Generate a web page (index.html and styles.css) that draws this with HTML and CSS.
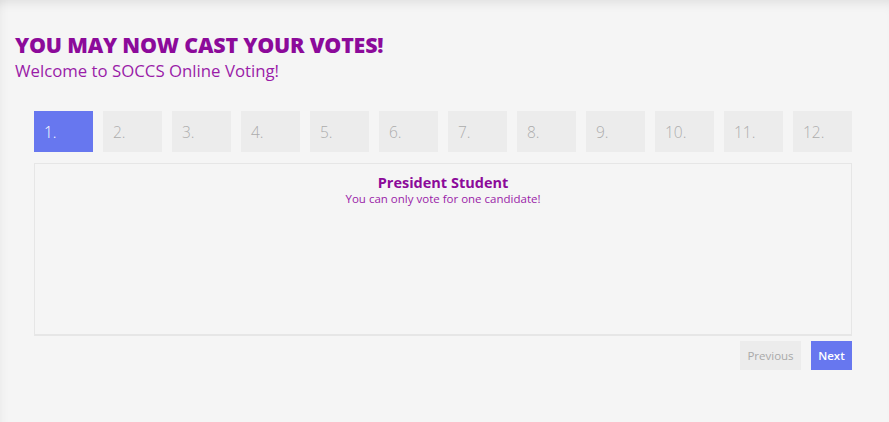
FILE: index.html
```html
<!DOCTYPE html>
<html lang="en">
<head>
<meta charset="utf-8">
<title>SOCCS Online Voting</title>
<link rel="stylesheet" href="styles.css">
</head>
<body>
<div class="page">
  <header class="intro">
    <h1 class="title">YOU MAY NOW CAST YOUR VOTES!</h1>
    <p class="welcome">Welcome to SOCCS Online Voting!</p>
  </header>
  <main class="wizard">
    <ol class="steps">
      <li class="step active">1.</li>
      <li class="step">2.</li>
      <li class="step">3.</li>
      <li class="step">4.</li>
      <li class="step">5.</li>
      <li class="step">6.</li>
      <li class="step">7.</li>
      <li class="step">8.</li>
      <li class="step">9.</li>
      <li class="step">10.</li>
      <li class="step">11.</li>
      <li class="step">12.</li>
    </ol>
    <section class="panel">
      <h2 class="position">President Student</h2>
      <p class="hint">You can only vote for one candidate!</p>
    </section>
    <div class="actions">
      <button class="btn btn-prev" type="button">Previous</button>
      <button class="btn btn-next" type="button">Next</button>
    </div>
  </main>
</div>
</body>
</html>
```
FILE: styles.css
```css
html, body {
  margin: 0;
  padding: 0;
}
body {
  background: #f5f5f5;
  font-family: "Open Sans", "Noto Sans", sans-serif;
}
.page {
  height: 422px;
  box-sizing: border-box;
  padding: 33px 0 0 0;
  box-shadow: inset 0 10px 12px -8px rgba(0, 0, 0, 0.10), inset 12px 0 10px -10px rgba(0, 0, 0, 0.04);
}
.intro {
  padding-left: 15px;
}
.title {
  margin: 0;
  font-size: 21.4px;
  line-height: 24px;
  font-weight: 800;
  color: #8c0a9a;
  letter-spacing: -0.2px;
}
.welcome {
  margin: 3px 0 0 0;
  font-size: 16.8px;
  line-height: 22px;
  font-weight: 400;
  color: #9a1ca8;
}
.wizard {
  width: 818px;
  margin: 29px 0 0 34px;
}
.steps {
  list-style: none;
  margin: 0;
  padding: 0;
  display: flex;
  gap: 10px;
}
.step {
  width: 59px;
  height: 41px;
  box-sizing: border-box;
  padding-left: 10px;
  display: flex;
  align-items: center;
  background: #ececec;
  color: #acacac;
  font-size: 15.5px;
  font-weight: 300;
}
.step.active {
  background: #6777ef;
  color: #ffffff;
}
.panel {
  margin-top: 11px;
  height: 173px;
  box-sizing: border-box;
  border: 1px solid #e6e6e6;
  border-bottom-width: 2px;
  padding-top: 10px;
  text-align: center;
}
.position {
  margin: 0;
  font-size: 14.5px;
  line-height: 17px;
  font-weight: 700;
  color: #8c0a9a;
}
.hint {
  margin: 1px 0 0 0;
  font-size: 11.5px;
  line-height: 14px;
  color: #9a1ca8;
}
.actions {
  margin-top: 5px;
  display: flex;
  justify-content: flex-end;
  gap: 10px;
}
.btn {
  height: 29px;
  border: none;
  padding: 0;
  font-family: inherit;
  font-size: 11.5px;
  font-weight: 500;
}
.btn-prev {
  width: 61px;
  background: #ececec;
  color: #a9a9a9;
}
.btn-next {
  width: 41px;
  background: #6777ef;
  color: #ffffff;
  font-weight: 600;
}
```
